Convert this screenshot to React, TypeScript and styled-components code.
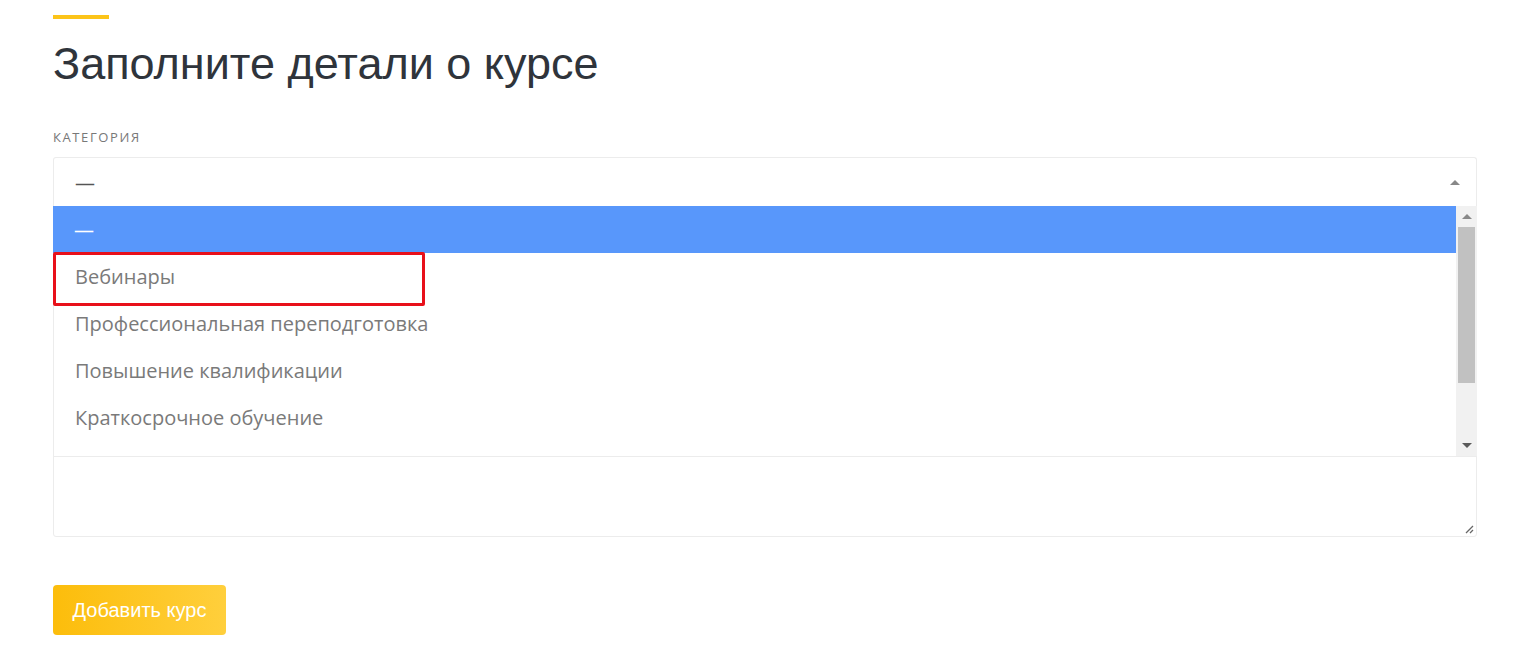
import React from "react";
import styled, { createGlobalStyle } from "styled-components";

const Global = createGlobalStyle`
  html, body { margin: 0; padding: 0; background: #fff; }
  body { font-family: "Open Sans", "Liberation Sans", sans-serif; }
  * { box-sizing: border-box; }
`;

const Page = styled.div`
  padding: 15px 45px 0 53px;
  display: flex;
  flex-direction: column;
`;

const Accent = styled.div`
  width: 56px;
  height: 4px;
  background: #fcc419;
`;

const Title = styled.h1`
  margin: 18px 0 0;
  font-family: "Liberation Sans", Arial, sans-serif;
  font-weight: 400;
  font-size: 45px;
  line-height: 54px;
  color: #2f343b;
`;

const Label = styled.div`
  margin-top: 37px;
  font-family: "Open Sans", sans-serif;
  font-size: 13px;
  line-height: 18px;
  letter-spacing: 1.6px;
  text-transform: uppercase;
  color: #787878;
`;

const SelectWrap = styled.div`
  position: relative;
  margin-top: 11px;
`;

const SelectBox = styled.div`
  height: 49px;
  border: 1px solid #ececec;
  border-bottom: none;
  border-radius: 3px 3px 0 0;
  display: flex;
  align-items: center;
  justify-content: space-between;
  padding: 0 16px 0 21px;
  font-size: 20px;
  color: #555;
`;

const Caret = styled.span<{ $down?: boolean }>`
  width: 0;
  height: 0;
  border-left: 5px solid transparent;
  border-right: 5px solid transparent;
  ${(p) =>
    p.$down
      ? "border-top: 5px solid #5a5a5a;"
      : "border-bottom: 5px solid #888;"}
`;

const Dropdown = styled.div`
  position: absolute;
  top: 100%;
  left: 0;
  right: 0;
  height: 251px;
  background: #fff;
  border: 1px solid #ececec;
  border-top: none;
  display: flex;
  z-index: 2;
`;

const Options = styled.ul`
  list-style: none;
  margin: 0;
  padding: 0;
  flex: 1;
  position: relative;
`;

const Option = styled.li<{ $active?: boolean }>`
  height: 47px;
  display: flex;
  align-items: center;
  padding-left: 21px;
  font-family: "Open Sans", sans-serif;
  font-size: 20px;
  color: ${(p) => (p.$active ? "#fff" : "#7a7a7a")};
  background: ${(p) => (p.$active ? "#5897fb" : "transparent")};
  margin-left: ${(p) => (p.$active ? "-1px" : "0")};
`;

const Highlight = styled.div`
  position: absolute;
  left: -1px;
  top: 46px;
  width: 372px;
  height: 54px;
  border: 3px solid #e8101a;
  border-radius: 2px;
  pointer-events: none;
`;

const Scrollbar = styled.div`
  width: 21px;
  background: #f1f1f1;
  display: flex;
  flex-direction: column;
  align-items: center;
  margin-right: -1px;
`;

const ScrollButton = styled.div`
  height: 21px;
  width: 100%;
  display: flex;
  align-items: center;
  justify-content: center;
`;

const Thumb = styled.div`
  width: 17px;
  height: 156px;
  background: #c1c1c1;
`;

const Track = styled.div`
  flex: 1;
`;

const TextArea = styled.div`
  margin-top: 40px;
  height: 291px;
  border: 1px solid #ececec;
  border-radius: 3px;
  position: relative;
`;

const Grip = styled.svg`
  position: absolute;
  right: 2px;
  bottom: 2px;
`;

const Button = styled.button`
  margin-top: 48px;
  align-self: flex-start;
  width: 173px;
  height: 50px;
  border: none;
  border-radius: 4px;
  background: linear-gradient(90deg, #fcbd0b 0%, #ffcf3c 100%);
  color: #fff;
  font-family: "Liberation Sans", Arial, sans-serif;
  font-size: 20px;
  cursor: pointer;
  padding: 0;
`;

const items = [
  "Вебинары",
  "Профессиональная переподготовка",
  "Повышение квалификации",
  "Краткосрочное обучение",
];

export default function App() {
  return (
    <>
      <Global />
      <Page>
        <Accent />
        <Title>Заполните детали о курсе</Title>
        <Label>Категория</Label>
        <SelectWrap>
          <SelectBox>
            <span>—</span>
            <Caret />
          </SelectBox>
          <Dropdown>
            <Options>
              <Option $active>—</Option>
              {items.map((t) => (
                <Option key={t}>{t}</Option>
              ))}
              <Highlight />
            </Options>
            <Scrollbar>
              <ScrollButton>
                <Caret />
              </ScrollButton>
              <Thumb />
              <Track />
              <ScrollButton>
                <Caret $down />
              </ScrollButton>
            </Scrollbar>
          </Dropdown>
        </SelectWrap>
        <TextArea>
          <Grip width="10" height="10" viewBox="0 0 10 10">
            <path d="M9 2 L2 9 M9 6 L6 9" stroke="#666" strokeWidth="1.3" />
          </Grip>
        </TextArea>
        <Button>Добавить курс</Button>
      </Page>
    </>
  );
}
